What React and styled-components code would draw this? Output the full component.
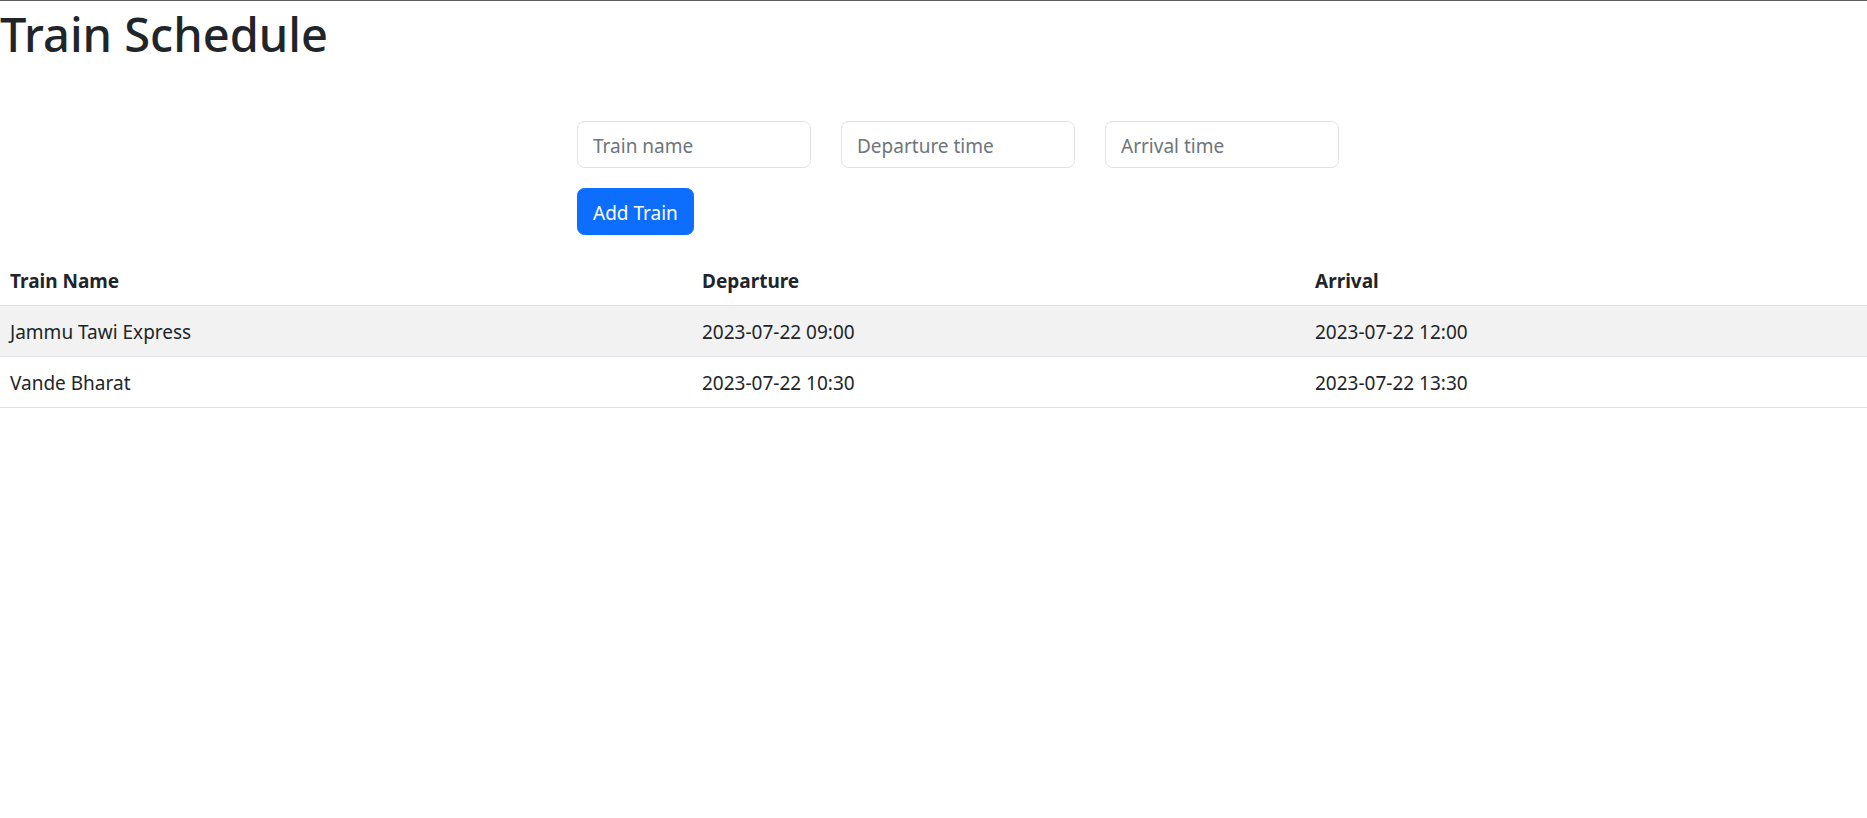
import React from "react";
import styled, { createGlobalStyle } from "styled-components";

const GlobalStyle = createGlobalStyle`
  html, body {
    margin: 0;
    padding: 0;
    background: #ffffff;
  }
  body {
    border-top: 1px solid #5f5f5f;
    font-family: "Noto Sans", "Open Sans", sans-serif;
    color: #212529;
    font-size: 19px;
    line-height: 1.5;
  }
  * { box-sizing: border-box; }
`;

const Page = styled.div`
  display: flex;
  flex-direction: column;
`;

const Title = styled.h1`
  margin: 0 0 7px 0;
  padding-top: 3px;
  font-size: 47px;
  font-weight: 500;
  line-height: 60px;
  color: #212529;
`;

const Form = styled.form`
  margin: 50px 0 20px 577px;
  display: flex;
  flex-direction: column;
  gap: 20px;
  align-items: flex-start;
`;

const InputRow = styled.div`
  display: flex;
  gap: 30px;
`;

const Input = styled.input`
  width: 234px;
  height: 47px;
  padding: 8.5px 15px 6.5px;
  font-family: inherit;
  font-size: 19px;
  line-height: 30px;
  color: #212529;
  background: #fff;
  border: 1px solid #dee2e6;
  border-radius: 7.5px;
  outline: none;
  &::placeholder {
    color: #6c757d;
  }
`;

const Button = styled.button`
  height: 47px;
  padding: 8.5px 15px 6.5px;
  font-family: inherit;
  font-size: 19px;
  line-height: 30px;
  color: #fff;
  background: #0d6efd;
  border: 1px solid #0d6efd;
  border-radius: 7.5px;
  cursor: pointer;
`;

const Table = styled.table`
  width: 100%;
  border-collapse: collapse;
  table-layout: fixed;
  color: #212529;
`;

const Col = styled.col`
  width: ${(p) => p.$w}px;
`;

const Th = styled.th`
  text-align: left;
  font-weight: 700;
  padding: 11px 10px 9px;
  line-height: 30px;
  border-bottom: 1px solid #dee2e6;
`;

const Tr = styled.tr`
  background: ${(p) => (p.$striped ? "#f2f2f2" : "#ffffff")};
`;

const Td = styled.td`
  padding: 11px 10px 9px;
  line-height: 30px;
  border-bottom: 1px solid #dee2e6;
`;

const trains = [
  { name: "Jammu Tawi Express", dep: "2023-07-22 09:00", arr: "2023-07-22 12:00" },
  { name: "Vande Bharat", dep: "2023-07-22 10:30", arr: "2023-07-22 13:30" },
];

export default function App() {
  return (
    <Page>
      <GlobalStyle />
      <Title>Train Schedule</Title>
      <Form onSubmit={(e) => e.preventDefault()}>
        <InputRow>
          <Input type="text" placeholder="Train name" />
          <Input type="text" placeholder="Departure time" />
          <Input type="text" placeholder="Arrival time" />
        </InputRow>
        <Button type="submit">Add Train</Button>
      </Form>
      <Table>
        <colgroup>
          <Col $w={692} />
          <Col $w={613} />
          <Col $w={562} />
        </colgroup>
        <thead>
          <tr>
            <Th>Train Name</Th>
            <Th>Departure</Th>
            <Th>Arrival</Th>
          </tr>
        </thead>
        <tbody>
          {trains.map((t, i) => (
            <Tr key={t.name} $striped={i % 2 === 0}>
              <Td>{t.name}</Td>
              <Td>{t.dep}</Td>
              <Td>{t.arr}</Td>
            </Tr>
          ))}
        </tbody>
      </Table>
    </Page>
  );
}
